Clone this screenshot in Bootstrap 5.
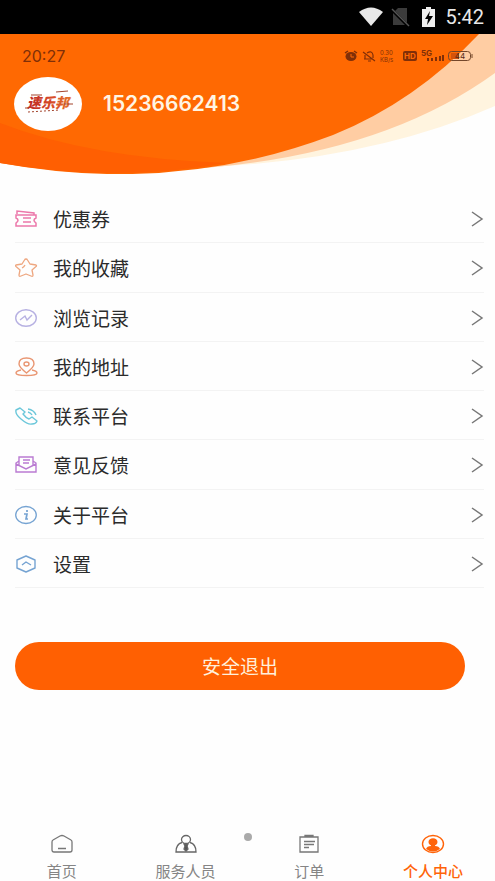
<!DOCTYPE html>
<html lang="zh-CN">
<head>
<meta charset="utf-8">
<meta name="viewport" content="width=device-width, initial-scale=1">
<title>个人中心</title>
<link rel="stylesheet" href="https://cdn.jsdelivr.net/npm/bootstrap@5.3.0/dist/css/bootstrap.min.css">
<style>
  body { font-family: "Noto Sans CJK SC", sans-serif; color: #2b2b2b; background: #fefefe; }
  svg { display: block; flex: none; }
  .device-bar { height: 34px; padding-right: 11px; font: 400 20px/34px Roboto, sans-serif; color: #e8e8e8; }
  .hero { height: 140px; }
  .hero-art { z-index: 0; }
  .hero-body { z-index: 1; }
  .phone-bar { height: 43px; padding: 0 22px; font-family: Inter, sans-serif; color: #802f08; }
  .phone-time { font-size: 16px; line-height: 20px; }
  .net-speed { font-size: 6px; line-height: 7px; width: 18px; }
  .net-speed span { display: block; }
  .profile { padding-left: 14px; gap: 21px; }
  .avatar { width: 68px; height: 54px; border-radius: 50%; }
  .account { font: 600 21px/24px Inter, sans-serif; color: #fff5e4; }
  .menu { min-height: 394px; margin: 20px 11px 0 15px; }
  .menu-row { color: #2b2b2b; font-size: 19px; line-height: 24px; padding-top: 2px; gap: 15px; border-bottom: 1px solid #f3f3f3; }
  .logout-wrap { padding: 54px 30px 0 15px; }
  .logout { height: 48px; border-radius: 24px; background: #ff6002; color: #fff0dc; font-size: 19px; line-height: 24px; }
  .logout:hover { background: #e95700; color: #fff0dc; }
  .tabs { padding: 14px 0 0; height: 61px; }
  .tab-item { color: #858585; font-size: 15px; line-height: 18px; gap: 8px; }
  .tab-item.active { color: #ff6308; font-weight: 500; }
  .page-dot { width: 8px; height: 8px; left: 50%; top: 13px; margin-left: -4px; background: #aaa; }
</style>
<script src="https://cdn.jsdelivr.net/npm/bootstrap@5.3.0/dist/js/bootstrap.bundle.min.js"></script>
</head>
<body>
<div class="d-flex flex-column min-vh-100">
  <div class="device-bar bg-black d-flex align-items-center justify-content-end">
    <svg width="82" height="24" viewBox="0 0 82 24" class="me-1" aria-hidden="true">
      <path d="M0 7Q12-2 24 7L12 21Z" fill="#e8e8e8"/>
      <path d="M39 3h9v17H34V8z" fill="#3b3b3b"/>
      <path d="M32 4l18 18" stroke="#000" stroke-width="3"/><path d="M33 4l17 17" stroke="#555" stroke-width="1.500"/>
      <path d="M67 2h5v2h4v18H63V4h4z" fill="#eee"/>
      <path d="M71 6l-5 8h3l-1 6 6-9h-4z" fill="#000"/>
    </svg>
    <span>5:42</span>
  </div>

  <header class="hero position-relative">
    <svg class="hero-art position-absolute top-0 start-0 w-100 h-100" viewBox="0 0 495 140" preserveAspectRatio="none" aria-hidden="true">
      <path d="M210 133Q375 125 495 72V0H300z" fill="#fff4df"/>
      <path d="M205 134Q385 119 495 39V0H300z" fill="#ffcda3"/>
      <path d="M0 0H479Q415 68 333 101Q175 161 0 129z" fill="#ff6902"/>
      <path d="M0 89Q90 124 226 129Q116 149 0 129z" fill="#ff5f02"/>
    </svg>
    <div class="hero-body position-relative">
      <div class="phone-bar d-flex align-items-center justify-content-between">
        <span class="phone-time">20:27</span>
        <div class="d-flex align-items-center gap-1">
          <svg width="32" height="14" viewBox="0 0 32 14" aria-hidden="true">
            <ellipse cx="7" cy="7.500" rx="5.500" ry="4.500" fill="#802f08"/>
            <path d="M1 4l3-2M10 2l3 2" stroke="#802f08" stroke-width="1.500"/>
            <path d="M7 5v3h3" fill="none" stroke="#ff6902"/>
            <path d="M19 3l12 9M20 10h9M21 10V6M23 4q5-3 6 2v3M24 12h3" fill="none" stroke="#802f08" stroke-width="1.200"/>
          </svg>
          <span class="net-speed"><span>0.30</span><span>KB/s</span></span>
          <svg width="71" height="14" viewBox="0 0 71 14" aria-hidden="true">
            <rect x="1" y="2" width="14" height="10" rx="2" fill="#802f08"/>
            <text x="8" y="10" text-anchor="middle" font-size="8" font-weight="700" fill="#ff6902">HD</text>
            <text x="19" y="7" font-size="8" font-weight="700" fill="#802f08">5G</text>
            <path d="M26 12v-3M30 12v-3M34 12v-4M38 12v-5M41 12V6" stroke="#802f08" stroke-width="2"/>
            <rect x="46.500" y="2.500" width="22" height="9" rx="3" fill="none" stroke="#73462a"/>
            <path d="M49 4h8v6h-8z" fill="#d4530a"/><path d="M70 5v4" stroke="#73462a"/>
            <text x="58" y="10" text-anchor="middle" font-size="8" fill="#572a16">44</text>
          </svg>
        </div>
      </div>
      <div class="profile d-flex align-items-center">
        <svg class="avatar bg-white" viewBox="0 0 68 54" role="img" aria-label="速乐邦">
          <defs><linearGradient id="brand"><stop stop-color="#bd2927"/><stop offset=".55" stop-color="#d74b28"/><stop offset="1" stop-color="#e5762b"/></linearGradient></defs>
          <text x="13" y="31" font-size="14" font-weight="900" font-style="italic" fill="url(#brand)">速乐邦</text>
          <path d="M17 18h11M42 15l12-1M11 31h4M50 27h9" stroke="#a3442d" fill="none"/>
          <path d="M14 35l32-2" stroke="#a3442d" stroke-dasharray="2 2"/>
        </svg>
        <span class="account">15236662413</span>
      </div>
    </div>
  </header>

  <main>
    <nav class="menu d-flex flex-column" aria-label="个人菜单">
      <a href="#" class="menu-row d-flex align-items-center flex-fill text-decoration-none">
        <svg width="23" height="20" viewBox="0 0 23 20" fill="none" stroke="#ec78aa" stroke-width="1.500"><path d="M1 6h20v3q-4 2 0 5v3H1v-3q4-3 0-5zM2 5V2l17 2v2M8 9h8M8 13h8"/></svg>
        <span class="flex-grow-1">优惠券</span>
        <svg width="13" height="16" viewBox="0 0 13 16" fill="none" stroke="#777" stroke-width="1.500"><path d="M1 1l10 7-10 7"/></svg>
      </a>
      <a href="#" class="menu-row d-flex align-items-center flex-fill text-decoration-none">
        <svg width="23" height="20" viewBox="0 0 23 20" fill="none" stroke="#eea780" stroke-width="1.300" stroke-linejoin="round"><path d="M11 1q1 0 1.500 1l2.500 4 6 1q1 .5 0 1.500L17 12l1 5q0 2-2 1l-5-2-5 2q-2 1-2-1l1-5-4-3.500Q0 7.500 1 7l6-1 2.500-4Q10 1 11 1zM7 10q2-1 3-3"/></svg>
        <span class="flex-grow-1">我的收藏</span>
        <svg width="13" height="16" viewBox="0 0 13 16" fill="none" stroke="#777" stroke-width="1.500"><path d="M1 1l10 7-10 7"/></svg>
      </a>
      <a href="#" class="menu-row d-flex align-items-center flex-fill text-decoration-none">
        <svg width="23" height="20" viewBox="0 0 23 20" fill="none" stroke="#b7b1e2" stroke-width="1.400"><ellipse cx="11" cy="10" rx="10.300" ry="8.300"/><path d="M5 12l5-4 2 4 5-5"/></svg>
        <span class="flex-grow-1">浏览记录</span>
        <svg width="13" height="16" viewBox="0 0 13 16" fill="none" stroke="#777" stroke-width="1.500"><path d="M1 1l10 7-10 7"/></svg>
      </a>
      <a href="#" class="menu-row d-flex align-items-center flex-fill text-decoration-none">
        <svg width="23" height="20" viewBox="0 0 23 20" fill="none" stroke="#e99672" stroke-width="1.400"><path d="M11.500 16Q4 10 4 7q0-6 7.500-6T19 7q0 3-7.500 9z"/><ellipse cx="11.500" cy="7" rx="2.500" ry="2"/><path d="M6 13q-5 1-5 3 0 2.500 10.500 2.500T22 16q0-2-5-3"/></svg>
        <span class="flex-grow-1">我的地址</span>
        <svg width="13" height="16" viewBox="0 0 13 16" fill="none" stroke="#777" stroke-width="1.500"><path d="M1 1l10 7-10 7"/></svg>
      </a>
      <a href="#" class="menu-row d-flex align-items-center flex-fill text-decoration-none">
        <svg width="23" height="20" viewBox="0 0 23 20" fill="none" stroke="#6bc7da" stroke-width="1.400" stroke-linejoin="round"><path d="M5 2L1 4q-1 4 5 9 7 6 11 5 4 0 5-3l-5-4-3 2q-3-1-6-5l2-2zM13 6q3 1 4 3M13 3q6 1 8 6"/></svg>
        <span class="flex-grow-1">联系平台</span>
        <svg width="13" height="16" viewBox="0 0 13 16" fill="none" stroke="#777" stroke-width="1.500"><path d="M1 1l10 7-10 7"/></svg>
      </a>
      <a href="#" class="menu-row d-flex align-items-center flex-fill text-decoration-none">
        <svg width="23" height="20" viewBox="0 0 23 20" fill="none" stroke="#ba7bd2" stroke-width="1.400"><path d="M4 6L1 8v9h20V8l-3-2M1 9l10 5 10-5M4 10V2h14v8M8 5h7M8 8h6"/></svg>
        <span class="flex-grow-1">意见反馈</span>
        <svg width="13" height="16" viewBox="0 0 13 16" fill="none" stroke="#777" stroke-width="1.500"><path d="M1 1l10 7-10 7"/></svg>
      </a>
      <a href="#" class="menu-row d-flex align-items-center flex-fill text-decoration-none">
        <svg width="23" height="20" viewBox="0 0 23 20" fill="none" stroke="#75a3d2" stroke-width="1.300"><ellipse cx="11" cy="10" rx="10.300" ry="8.500"/><path d="M9 9h3l-1 5h2M12 5v2" stroke-width="1.700"/></svg>
        <span class="flex-grow-1">关于平台</span>
        <svg width="13" height="16" viewBox="0 0 13 16" fill="none" stroke="#777" stroke-width="1.500"><path d="M1 1l10 7-10 7"/></svg>
      </a>
      <a href="#" class="menu-row d-flex align-items-center flex-fill text-decoration-none">
        <svg width="23" height="20" viewBox="0 0 23 20" fill="none" stroke="#75a3d2" stroke-width="1.400" stroke-linejoin="round"><path d="M11 2l9 4v8l-9 4-9-4V6zM7 11l4-3 5 3"/></svg>
        <span class="flex-grow-1">设置</span>
        <svg width="13" height="16" viewBox="0 0 13 16" fill="none" stroke="#777" stroke-width="1.500"><path d="M1 1l10 7-10 7"/></svg>
      </a>
    </nav>
    <div class="logout-wrap">
      <button type="button" class="logout btn w-100 border-0 p-0">安全退出</button>
    </div>
  </main>

  <nav class="tabs position-relative mt-auto" aria-label="底部导航">
    <div class="row g-0 text-center">
      <a href="#" class="tab-item col d-flex flex-column align-items-center text-decoration-none">
        <svg width="24" height="20" viewBox="0 0 24 20" fill="none" stroke="#777" stroke-width="1.300" stroke-linejoin="round"><path d="M10 2q2-1 4 0l7 4q1 .5 1 2v8q0 2-2 2H4q-2 0-2-2V8q0-1.500 1-2zM8 14.500h8"/></svg>
        <span>首页</span>
      </a>
      <a href="#" class="tab-item col d-flex flex-column align-items-center text-decoration-none">
        <svg width="24" height="20" viewBox="0 0 24 20" fill="none" stroke="#666" stroke-width="1.300"><ellipse cx="12" cy="5.500" rx="4.500" ry="4"/><path d="M8 8.500Q2 10 2 18h20q0-8-6-9.500"/><path d="M10 10h4l-1 2 1 3-2 2-2-2 1-3z" fill="#555"/></svg>
        <span>服务人员</span>
      </a>
      <a href="#" class="tab-item col d-flex flex-column align-items-center text-decoration-none">
        <svg width="24" height="20" viewBox="0 0 24 20" fill="none" stroke="#777" stroke-width="1.300"><path d="M8 3H3v15h18V3h-5M8 3V1.500h8V3zM7 7.500h11M7 10.500h10M7 13.500h5"/></svg>
        <span>订单</span>
      </a>
      <a href="#" class="tab-item active col d-flex flex-column align-items-center text-decoration-none" aria-current="page">
        <svg width="24" height="20" viewBox="0 0 24 20" fill="none" stroke="#ff6308" stroke-width="1.400"><ellipse cx="12" cy="10" rx="10.500" ry="8.500"/><ellipse cx="12" cy="8" rx="4.500" ry="3.800" fill="#ff6308" stroke="none"/><path d="M10 10h4v2q4 0 5 3-7 5-14 0 1-3 5-3z" fill="#ff6308" stroke="none"/></svg>
        <span>个人中心</span>
      </a>
    </div>
    <span class="page-dot position-absolute rounded-circle"></span>
  </nav>
</div>
</body>
</html>
